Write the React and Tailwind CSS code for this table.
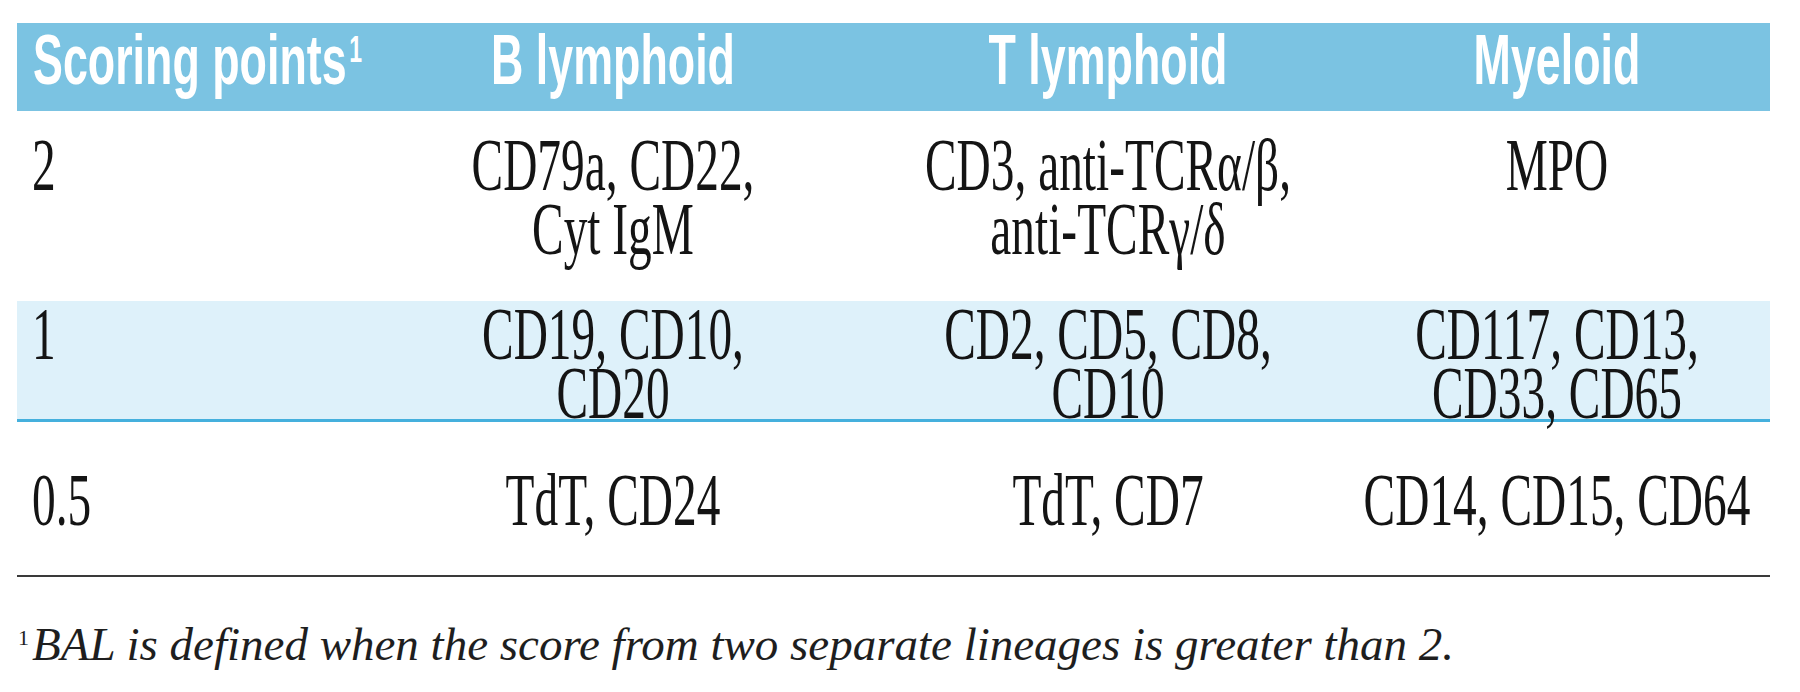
const cols = 'grid grid-cols-[337px_518px_472px_426px]';
const serif = "font-['Liberation_Serif',serif]";

function Left({ children }) {
  return (
    <div className="pl-[15px]">
      <span className="inline-block origin-left whitespace-nowrap [transform:scaleX(0.64)]">{children}</span>
    </div>
  );
}

function Center({ lines }) {
  return (
    <div className="flex flex-col items-center whitespace-nowrap [transform:scaleX(0.64)]">
      {lines.map((l) => (
        <div key={l}>{l}</div>
      ))}
    </div>
  );
}

function Head({ children }) {
  return (
    <div className="flex justify-center whitespace-nowrap [transform:scaleX(0.64)]">{children}</div>
  );
}

const rows = [
  {
    score: '2',
    b: ['CD79a, CD22,', 'Cyt IgM'],
    t: ['CD3, anti-TCRα/β,', 'anti-TCRγ/δ'],
    m: ['MPO'],
  },
  {
    score: '1',
    b: ['CD19, CD10,', 'CD20'],
    t: ['CD2, CD5, CD8,', 'CD10'],
    m: ['CD117, CD13,', 'CD33, CD65'],
  },
  {
    score: '0.5',
    b: ['TdT, CD24'],
    t: ['TdT, CD7'],
    m: ['CD14, CD15, CD64'],
  },
];

export default function App() {
  const [r1, r2, r3] = rows;
  return (
    <div className="min-h-screen bg-white pt-[23px]">
      <div className={`ml-[17px] w-[1753px] ${serif} text-[74px] text-[#141414]`}>
        {/* header */}
        <div
          className={`${cols} h-[88px] bg-[#7bc3e2] pt-[2px] font-['Liberation_Sans',sans-serif] text-[70px] font-bold leading-[70px] text-white`}
        >
          <div className="pl-[16px]">
            <span className="inline-block origin-left whitespace-nowrap [transform:scaleX(0.64)]">
              Scoring points
              <span className="ml-[4px] mt-[7px] inline-block align-top text-[36px] leading-[36px]">1</span>
            </span>
          </div>
          <Head>B lymphoid</Head>
          <Head>T lymphoid</Head>
          <Head>Myeloid</Head>
        </div>

        {/* score 2 */}
        <div className={`${cols} h-[190px] pt-[22px] leading-[64px]`}>
          <Left>{r1.score}</Left>
          <Center lines={r1.b} />
          <Center lines={r1.t} />
          <Center lines={r1.m} />
        </div>

        {/* score 1 */}
        <div className={`${cols} h-[121px] border-b-[3px] border-[#45b0dd] bg-[#def1fa] pt-[4px] leading-[59px]`}>
          <Left>{r2.score}</Left>
          <Center lines={r2.b} />
          <Center lines={r2.t} />
          <Center lines={r2.m} />
        </div>

        {/* score 0.5 */}
        <div className={`${cols} h-[153px] pt-[46px] leading-[64px]`}>
          <Left>{r3.score}</Left>
          <Center lines={r3.b} />
          <Center lines={r3.t} />
          <Center lines={r3.m} />
        </div>

        <div className="h-[2px] bg-[#3a3a3a]" />

        <p className="mt-[44px] whitespace-nowrap pl-[1px] text-[47px] italic leading-[47px] text-[#1e1e1e]">
          <span className="mr-[3px] mt-[6px] inline-block align-top text-[22px] not-italic leading-[22px]">1</span>
          BAL is defined when the score from two separate lineages is greater than 2.
        </p>
      </div>
    </div>
  );
}
